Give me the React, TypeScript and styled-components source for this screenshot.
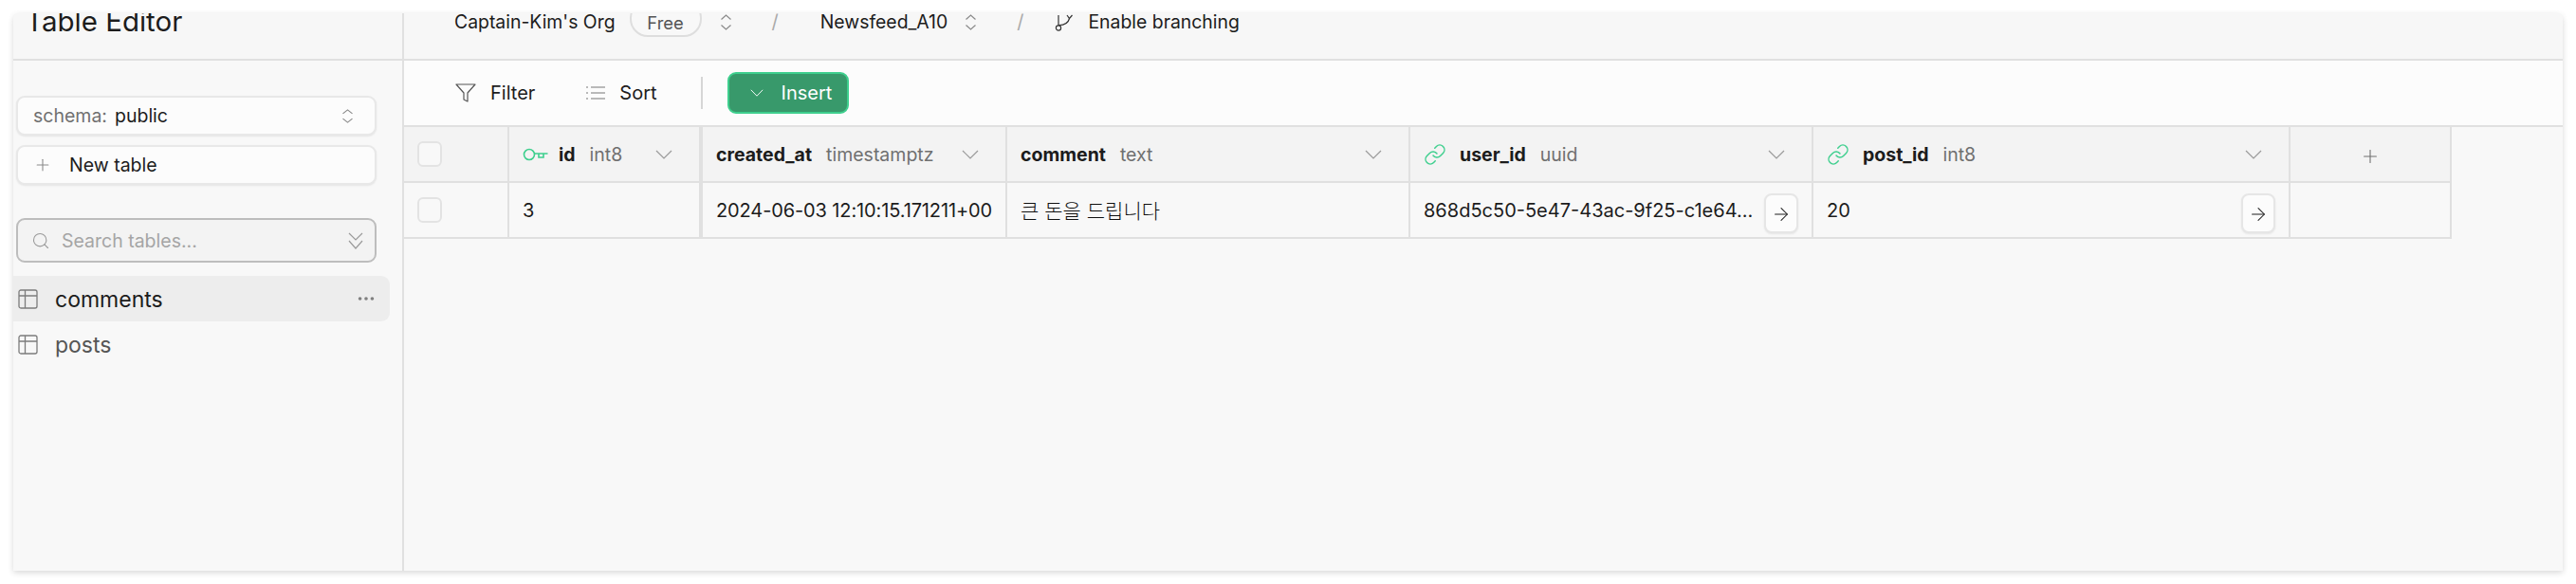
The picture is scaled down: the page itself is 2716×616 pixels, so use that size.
import React from "react";
import styled, { createGlobalStyle } from "styled-components";
import { Plus, ArrowRight, Link as LinkIcon, Search, Ellipsis } from "lucide-react";

const Global = createGlobalStyle`
  html, body { margin: 0; padding: 0; background: #fff; }
  body { font-family: Inter, "Noto Sans CJK KR", sans-serif; color: #1c1c1c; }
  #root { padding: 14px; box-sizing: border-box; width: 2716px; height: 616px; }
`;
const Win = styled.div`
  height: 588px; display: grid; grid-template-columns: 412px 1fr; background: #f8f8f8; overflow: hidden;
  border-radius: 6px 6px 0 0; box-shadow: 0 2px 6px rgba(0,0,0,.16);
`;
const Side = styled.aside`display: flex; flex-direction: column; border-right: 2px solid #e0e0e0;`;
const Title = styled.header`
  height: 50px; box-sizing: border-box; border-bottom: 2px solid #e0e0e0; overflow: hidden; padding-left: 13px; background: #f7f7f7;
  font-size: 29.5px; line-height: 34px; color: #1c1c1c;
  & > span { display: block; margin-top: -9px; }
`;
const SideBody = styled.div`padding: 37px 0 0 3px; display: flex; flex-direction: column;`;
const Ctl = styled.div`
  width: 380px; height: 42px; box-sizing: border-box; background: #fcfcfc; border: 2px solid #e8e8e8; border-radius: 9px;
  display: flex; align-items: center; font-size: 19.5px; color: #1c1c1c; padding: 0 16px; margin-bottom: 10px;
  box-shadow: 0 1px 2px rgba(0,0,0,.08);
`;
const Muted = styled.span`color: #707070; margin-right: 8px;`;
const End = styled.span`margin-left: auto; display: flex;`;
const SearchBox = styled(Ctl)`
  height: 47px; margin: 25px 0 14px; background: #f3f3f3; border-color: #bdbdbd; color: #a5a5a5; padding: 0 12px 0 14px;
  box-shadow: none; gap: 12px;
`;
const Item = styled.div<{ $on?: boolean }>`
  height: 48px; width: 397px; padding-left: 5px; box-sizing: border-box; display: flex; align-items: center;
  border-radius: 0 9px 9px 0; background: ${p => (p.$on ? "#ededed" : "transparent")};
  color: ${p => (p.$on ? "#1c1c1c" : "#555")}; font-size: 23px; gap: 18px; padding-right: 14px;
`;
const ItemName = styled.span`padding-top: 2px;`;
const Main = styled.main`display: flex; flex-direction: column; min-width: 0;`;
const Top = styled.header`
  height: 50px; box-sizing: border-box; border-bottom: 2px solid #e0e0e0; background: #f7f7f7; display: flex; align-items: flex-start;
  padding-left: 53px; font-size: 19.4px; color: #1c1c1c; overflow: hidden;
`;
const TopItem = styled.span<{ $gap?: number }>`
  display: flex; align-items: center; height: 19px; line-height: 19px; white-space: nowrap; margin-left: ${p => p.$gap ?? 0}px;
`;
const Pill = styled.span`
  height: 39px; margin: -14px 0 0 15px; padding: 8px 17px 0; box-sizing: border-box; border: 2px solid #dedede; border-radius: 19px;
  display: flex; align-items: center; font-size: 18.4px; color: #555; background: #f8f8f8; width: 76px; justify-content: center;
`;
const Slash = styled.span`color: #aaa; font-size: 20px;`;
const Tools = styled.div`
  height: 70px; box-sizing: border-box; background: #fcfcfc; border-bottom: 2px solid #e0e0e0; display: flex; align-items: center; padding-left: 54px;
  font-size: 20px;
`;
const Tool = styled.span<{ $gap?: number }>`display: flex; align-items: center; gap: 15px; margin-left: ${p => p.$gap ?? 0}px;`;
const Rule = styled.span`width: 2px; height: 34px; background: #d6d6d6; margin-left: 46px;`;
const Insert = styled.button`
  width: 128px; height: 44px; box-sizing: border-box; border: 2px solid #3ecf8e; border-radius: 9px; background: #38996b; color: #fff; font: inherit;
  display: flex; align-items: center; padding: 0 0 0 22px; gap: 19px; margin-left: 26px;
`;
const Grid = styled.div`
  display: grid; width: 2159px; grid-template-columns: 111px 204px 321px 425px 425px 503px 170px; grid-auto-rows: 59px;
`;
const Cell = styled.div<{ $head?: boolean; $thick?: boolean; $center?: boolean }>`
  box-sizing: border-box; display: flex; align-items: center; border-bottom: 2px solid #e0e0e0; border-right: ${p => (p.$thick ? "4px" : "2px")} solid #e0e0e0;
  background: ${p => (p.$head ? "#f3f3f3" : "#f8f8f8")}; padding: 0 14px; font-size: 20px; min-width: 0; position: relative;
  justify-content: ${p => (p.$center ? "center" : "flex-start")};
`;
const Check = styled.span`width: 26px; height: 27px; box-sizing: border-box; border: 2px solid #e3e3e3; border-radius: 6px; background: #f8f8f8;`;
const Name = styled.b<{ $gap?: number }>`font-weight: 700; font-size: 19.5px; margin-left: ${p => p.$gap ?? 0}px;`;
const Type = styled.span`color: #707070; font-size: 19.5px; margin-left: 15px;`;
const Go = styled.span`
  position: absolute; right: 14px; top: 11px; width: 36px; height: 42px; box-sizing: border-box; border: 2px solid #e6e6e6; border-radius: 8px; background: #fcfcfc;
  display: flex; align-items: center; justify-content: center; box-shadow: 0 1px 2px rgba(0,0,0,.08); padding-top: 2px;
`;
const Val = styled.span`white-space: nowrap; overflow: hidden;`;
const Stamp = styled(Val)`overflow: visible; letter-spacing: -.12px;`;
const Korean = styled(Val)`font-size: 21px; font-weight: 300; color: #111; margin-bottom: 2px;`;
const ChevBox = styled(End)`margin-right: 14px;`;
const PlusBox = styled.span`display: flex; margin-top: 5px;`;
const LinkBox = styled.span`display: flex; margin-right: 14px;`;

const Updown = ({ c = "#8a8a8a", h = 17 }: { c?: string; h?: number }) => (
  <svg width="13" height={h} viewBox="0 0 13 17" fill="none" stroke={c} strokeWidth="1.2" preserveAspectRatio="none"><path d="M1.5 5.5l5-4.5 5 4.5M1.5 11.5l5 4.5 5-4.5" /></svg>
);
const DoubleDown = () => (
  <svg width="16" height="18" viewBox="0 0 16 18" fill="none" stroke="#9a9a9a" strokeWidth="1.2"><path d="M1 1l7 7 7-7M1 9l7 8 7-8" /></svg>
);
const TableIcon = () => (
  <svg width="21" height="21" viewBox="0 0 21 21" fill="none" stroke="#7c7c7c" strokeWidth="1.3"><rect x="1" y="1" width="19" height="19" rx="2" /><path d="M1 7h19M7.5 1v19" /></svg>
);
const Key = () => (
  <svg width="27" height="16" viewBox="0 0 27 16" fill="none" stroke="#3ecf8e" strokeWidth="1.6"><circle cx="7" cy="8" r="5.5" /><path d="M12.5 7h14M17 7v4h5V7" /></svg>
);
const Branch = () => (
  <svg width="20" height="18" viewBox="0 0 20 18" fill="none" stroke="#333" strokeWidth="1.2">
    <circle cx="4" cy="14.5" r="2.6" /><path d="M4 12V1M4.5 11.5c6 0 10-3 11-7" /><path d="M13 1l2.5 3.5L18.5 1" />
  </svg>
);
const Funnel = () => (
  <svg width="22" height="20" viewBox="0 0 22 20" fill="none" stroke="#555" strokeWidth="1.2" strokeLinejoin="round"><path d="M1 1h20l-8 9v9l-4-2v-7z" /></svg>
);
const SortIcon = () => (
  <svg width="20" height="16" viewBox="0 0 20 16" fill="none" stroke="#777" strokeWidth="1.2"><path d="M5 2h15M5 8h15M5 14h15M0 2h2M0 8h2M0 14h2" /></svg>
);
const Link = () => <LinkBox><LinkIcon size={24} color="#3ecf8e" strokeWidth={1.5} /></LinkBox>;
const ChevronSvg = ({ c = "#9a9a9a", w = 18, h = 10 }: { c?: string; w?: number; h?: number }) => (
  <svg width={w} height={h} viewBox="0 0 18 10" fill="none" stroke={c} strokeWidth="1.2" preserveAspectRatio="none"><path d="M1 1l8 8 8-8" /></svg>
);
const Chev = () => <ChevBox><ChevronSvg /></ChevBox>;

export default function App() {
  return (
    <>
      <Global />
      <Win>
        <Side>
          <Title><span>Table Editor</span></Title>
          <SideBody>
            <Ctl><Muted>schema:</Muted>public<End style={{ marginRight: 6 }}><Updown h={15} /></End></Ctl>
            <Ctl><Plus size={20} color="#8a8a8a" strokeWidth={1.3} style={{ marginRight: 18 }} />New table</Ctl>
            <SearchBox><Search size={20} color="#9a9a9a" strokeWidth={1.3} />Search tables...<End><DoubleDown /></End></SearchBox>
          </SideBody>
          <Item $on><TableIcon /><ItemName>comments</ItemName><End><Ellipsis size={22} color="#808080" /></End></Item>
          <Item><TableIcon /><ItemName>posts</ItemName></Item>
        </Side>
        <Main>
          <Top>
            <TopItem>Captain-Kim's Org</TopItem>
            <Pill>Free</Pill>
            <TopItem $gap={19}><Updown /></TopItem>
            <TopItem $gap={42}><Slash>/</Slash></TopItem>
            <TopItem $gap={44}>Newsfeed_A10</TopItem>
            <TopItem $gap={18}><Updown /></TopItem>
            <TopItem $gap={42}><Slash>/</Slash></TopItem>
            <TopItem $gap={33}><Branch /></TopItem>
            <TopItem $gap={15}>Enable branching</TopItem>
          </Top>
          <Tools>
            <Tool><Funnel />Filter</Tool>
            <Tool $gap={54}><SortIcon />Sort</Tool>
            <Rule />
            <Insert><ChevronSvg c="#fff" w={14} h={8} />Insert</Insert>
          </Tools>
          <Grid>
            <Cell $head><Check /></Cell>
            <Cell $head $thick><Key /><Name $gap={11}>id</Name><Type>int8</Type><Chev /></Cell>
            <Cell $head><Name>created_at</Name><Type>timestamptz</Type><Chev /></Cell>
            <Cell $head><Name>comment</Name><Type>text</Type><Chev /></Cell>
            <Cell $head><Link /><Name>user_id</Name><Type>uuid</Type><Chev /></Cell>
            <Cell $head><Link /><Name>post_id</Name><Type>int8</Type><Chev /></Cell>
            <Cell $head $center><PlusBox><Plus size={22} color="#707070" strokeWidth={1.2} /></PlusBox></Cell>
            <Cell><Check /></Cell>
            <Cell $thick><Val>3</Val></Cell>
            <Cell><Stamp>2024-06-03 12:10:15.171211+00</Stamp></Cell>
            <Cell><Korean>큰 돈을 드립니다</Korean></Cell>
            <Cell><Val>868d5c50-5e47-43ac-9f25-c1e64...</Val><Go><ArrowRight size={22} strokeWidth={1.1} /></Go></Cell>
            <Cell><Val>20</Val><Go><ArrowRight size={22} strokeWidth={1.1} /></Go></Cell>
            <Cell />
          </Grid>
        </Main>
      </Win>
    </>
  );
}
